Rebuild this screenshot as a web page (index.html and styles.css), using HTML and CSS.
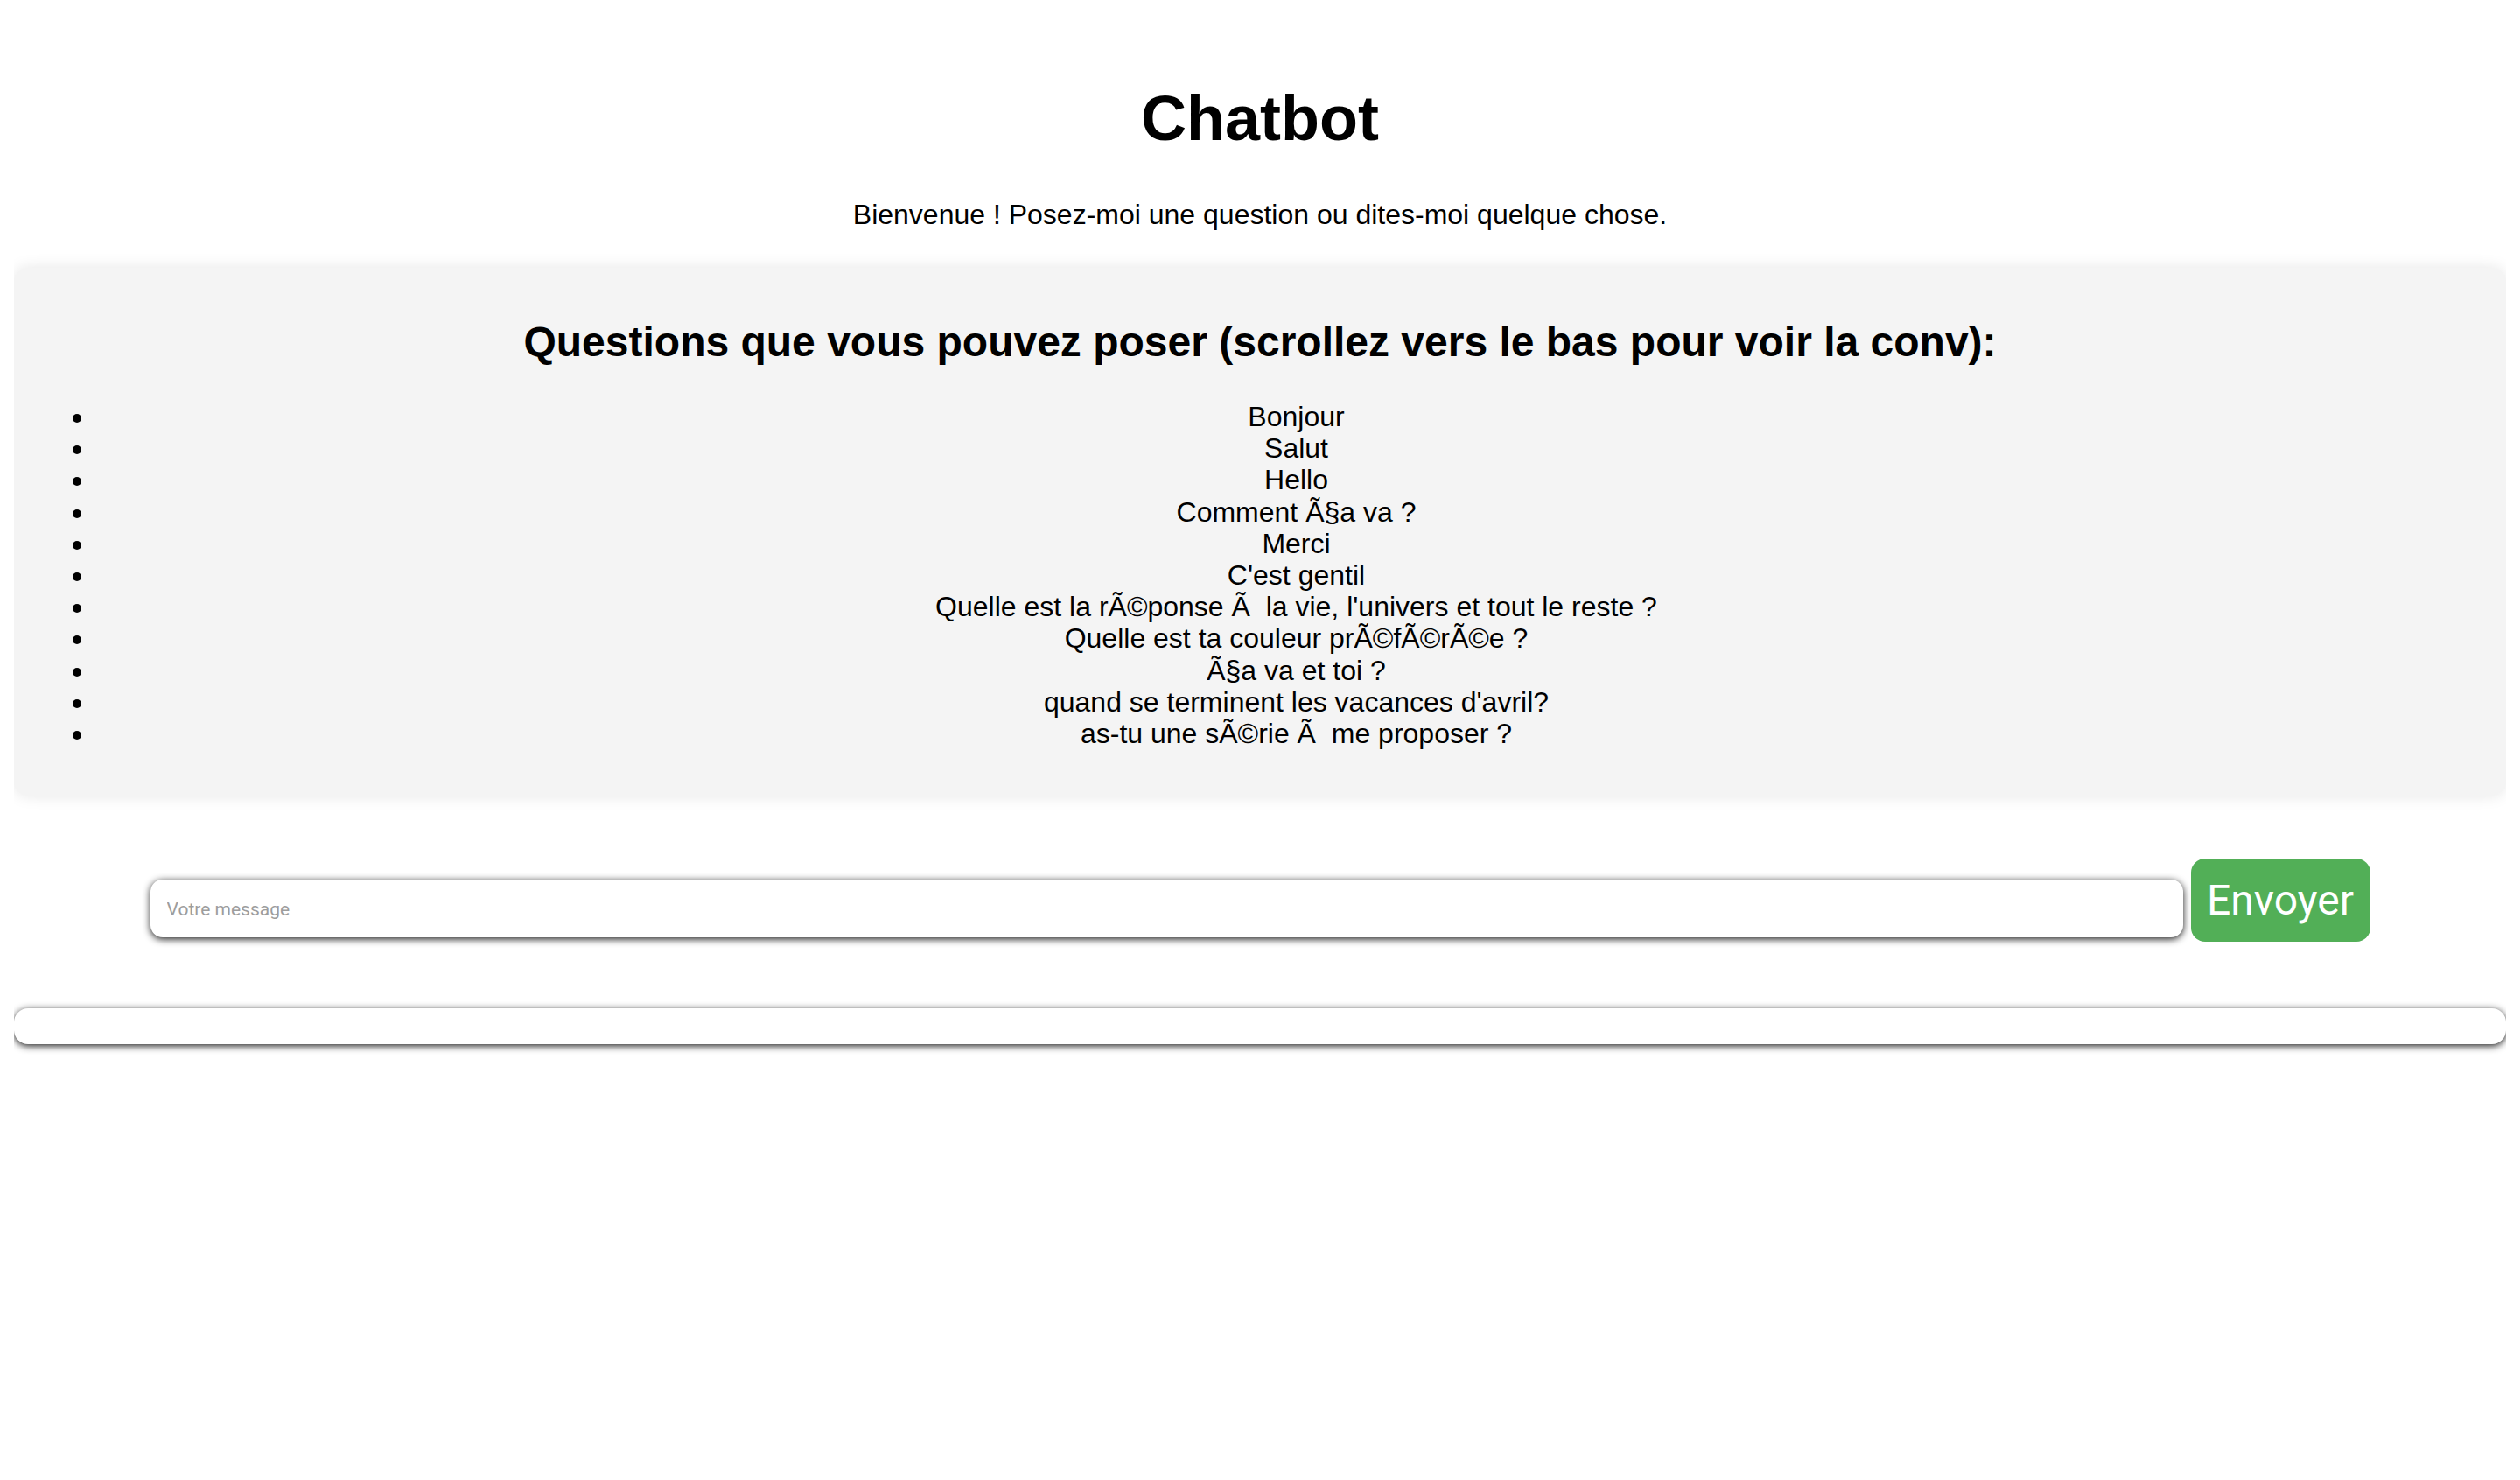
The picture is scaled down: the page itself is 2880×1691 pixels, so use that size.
FILE: index.html
```html
<!DOCTYPE html>
<html lang="fr">
<head>
<meta charset="utf-8">
<title>Chatbot</title>
<link rel="stylesheet" href="styles.css">
</head>
<body>
<h1 class="title">Chatbot</h1>
<p class="intro">Bienvenue ! Posez-moi une question ou dites-moi quelque chose.</p>
<section class="panel">
  <h2 class="panel-title">Questions que vous pouvez poser (scrollez vers le bas pour voir la conv):</h2>
  <ul class="questions">
    <li>Bonjour</li>
    <li>Salut</li>
    <li>Hello</li>
    <li>Comment Ã§a va ?</li>
    <li>Merci</li>
    <li>C'est gentil</li>
    <li>Quelle est la rÃ©ponse Ã&nbsp; la vie, l'univers et tout le reste ?</li>
    <li>Quelle est ta couleur prÃ©fÃ©rÃ©e ?</li>
    <li>Ã§a va et toi ?</li>
    <li>quand se terminent les vacances d'avril?</li>
    <li>as-tu une sÃ©rie Ã&nbsp; me proposer ?</li>
  </ul>
</section>
<form class="composer">
  <input class="message" type="text" placeholder="Votre message">
  <button class="send" type="button">Envoyer</button>
</form>
<div class="conversation"></div>
</body>
</html>
```
FILE: styles.css
```css
html, body {
  background: #ffffff;
}
body {
  margin: 0 16px;
  padding: 0 0 40px;
  font-family: "Liberation Sans", Arial, sans-serif;
  color: #000;
}
.title {
  margin: 94px 0 0;
  font-size: 72px;
  line-height: 83px;
  font-weight: bold;
  text-align: center;
}
.intro {
  margin: 50px 0 0;
  font-size: 32px;
  line-height: 37px;
  text-align: center;
}
.panel {
  margin-top: 42px;
  background: #f4f4f4;
  border-radius: 16px;
  padding: 18px;
  box-shadow: 0 0 18px rgba(0, 0, 0, 0.1);
  text-align: center;
}
.panel-title {
  margin: 39px 0 0;
  font-size: 48px;
  line-height: 55px;
  font-weight: bold;
}
.questions {
  margin: 40px -8px 35px 0;
  padding-left: 75px;
  font-size: 32px;
  line-height: 36.2px;
}
.composer {
  margin: 72px 0 0;
  display: flex;
  justify-content: center;
  align-items: flex-start;
  gap: 9px;
}
.message {
  box-sizing: border-box;
  width: 2323px;
  height: 66px;
  margin-top: 24px;
  border: none;
  border-radius: 14px;
  padding: 2px 19px 0;
  background: #fff;
  box-shadow: 0 2px 9px rgba(0, 0, 0, 0.9);
  font-family: Roboto, "Noto Sans", sans-serif;
  font-size: 21px;
  outline: none;
}
.message::placeholder {
  color: #9d9d9d;
}
.send {
  box-sizing: border-box;
  width: 205px;
  height: 95px;
  border: none;
  border-radius: 16px;
  background: #52af57;
  color: #fff;
  font-family: Roboto, "Noto Sans", sans-serif;
  font-size: 48px;
  padding: 0;
}
.conversation {
  margin-top: 76px;
  height: 41px;
  background: #fff;
  border-radius: 16px;
  box-shadow: 0 2px 9px rgba(0, 0, 0, 0.9);
}
```
